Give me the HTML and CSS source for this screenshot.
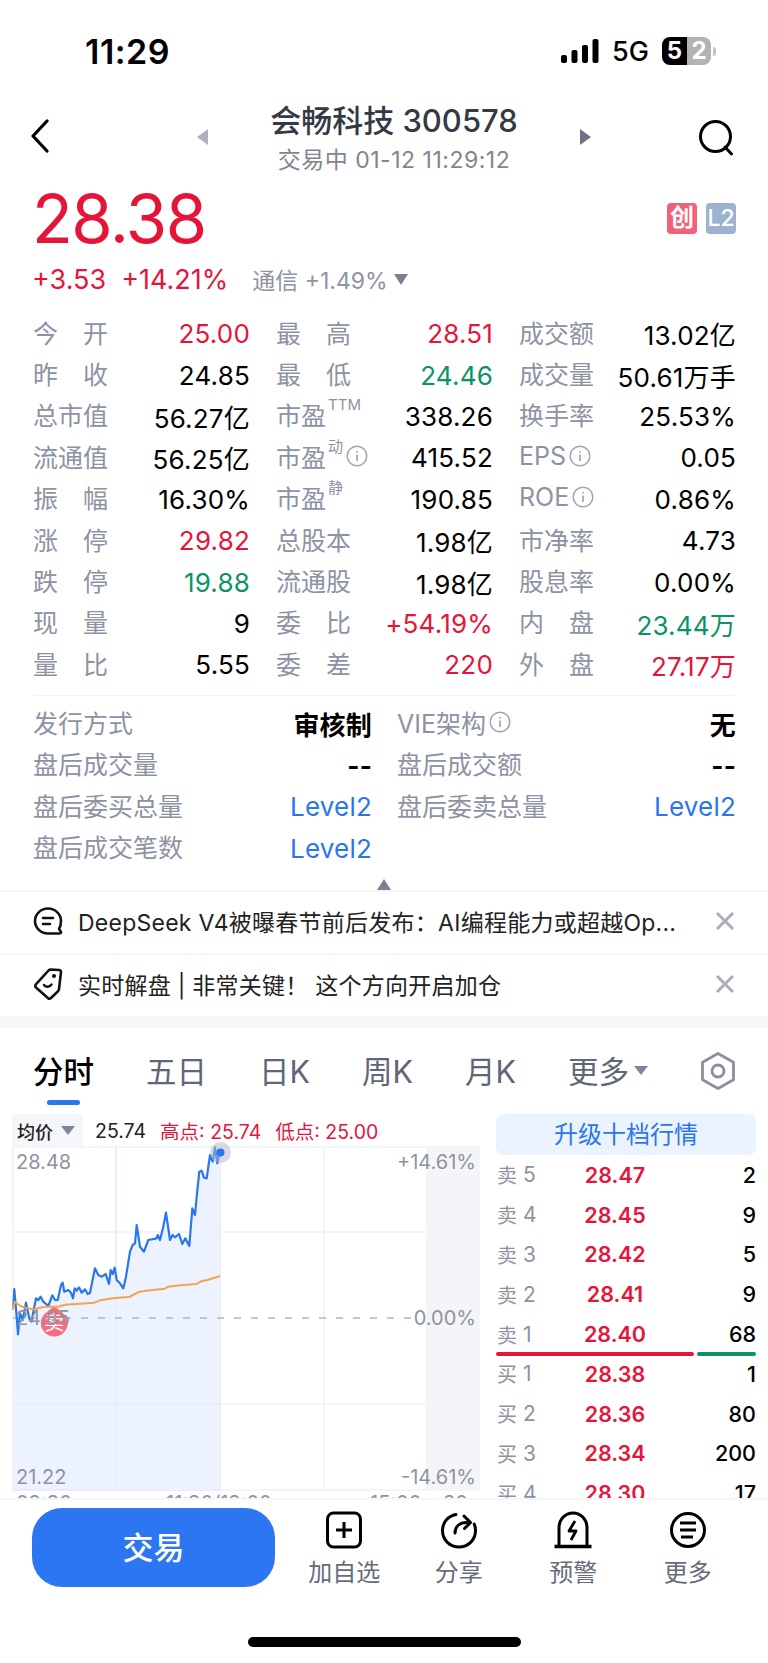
FILE: index.html
```html
<!DOCTYPE html>
<html lang="zh-CN">
<head>
  <meta charset="UTF-8">
  <title>会畅科技 300578</title>
  <link rel="stylesheet" href="styles.css">
</head>
<body>
  <svg class="defs" width="0" height="0">
    <symbol id="info" viewBox="0 0 22 22">
      <circle cx="11" cy="11" r="9.8" fill="none" stroke="currentColor" stroke-width="1.5"/>
      <path d="M11 9.5v6.5M11 6v1.6" fill="none" stroke="currentColor" stroke-width="1.7"/>
    </symbol>
    <symbol id="close" viewBox="0 0 20 20">
      <path d="M2 2l16 16M18 2L2 18" fill="none" stroke="currentColor" stroke-width="3"/>
    </symbol>
  </svg>

  <div class="status">
    <span class="clock">11:29</span>
    <div class="status-right">
      <svg class="signal" width="38" height="24" viewBox="0 0 38 24">
        <rect x="0" y="16" width="6" height="8" rx="2"/>
        <rect x="10.500" y="11" width="6" height="13" rx="2"/>
        <rect x="21" y="6" width="6" height="18" rx="2"/>
        <rect x="31.500" y="0" width="6" height="24" rx="2"/>
      </svg>
      <span class="net">5G</span>
      <div class="battery"><span class="batt-a">5</span><span class="batt-b">2</span></div>
      <i class="batt-nub"></i>
    </div>
  </div>

  <div class="nav">
    <div class="nav-back">
      <svg width="20" height="34" viewBox="0 0 20 34"><path d="M17 2L3 17l14 15" fill="none" stroke="#000" stroke-width="3.200" stroke-linecap="round" stroke-linejoin="round"/></svg>
    </div>
    <div class="nav-mid">
      <i class="arrow-left"></i>
      <div class="nav-title">
        <div class="stock-name">会畅科技 300578</div>
        <div class="stock-sub">交易中 01-12 11:29:12</div>
      </div>
      <i class="arrow-right"></i>
    </div>
    <svg class="nav-search" width="36" height="38" viewBox="0 0 36 38">
      <circle cx="17.500" cy="17.500" r="15" fill="none" stroke="#000" stroke-width="3"/>
      <path d="M27 28l6.500 7" fill="none" stroke="#000" stroke-width="3" stroke-linecap="round"/>
    </svg>
  </div>

  <div class="quote">
    <div class="price-row">
      <span class="price">28.38</span>
      <div class="tags"><span class="tag tag-red">创</span><span class="tag tag-blue">L2</span></div>
    </div>
    <div class="change-row">
      <span class="change">+3.53</span>
      <span class="change">+14.21%</span>
      <span class="sector">通信 +1.49%</span>
      <i class="tri-down"></i>
    </div>
  </div>

  <div class="stats">
    <div class="cell"><span class="lbl">今　开</span><span class="val red">25.00</span></div>
    <div class="cell"><span class="lbl">最　高</span><span class="val red">28.51</span></div>
    <div class="cell"><span class="lbl">成交额</span><span class="val">13.02亿</span></div>

    <div class="cell"><span class="lbl">昨　收</span><span class="val">24.85</span></div>
    <div class="cell"><span class="lbl">最　低</span><span class="val green">24.46</span></div>
    <div class="cell"><span class="lbl">成交量</span><span class="val">50.61万手</span></div>

    <div class="cell"><span class="lbl">总市值</span><span class="val">56.27亿</span></div>
    <div class="cell"><span class="lbl">市盈<sup class="sup">TTM</sup></span><span class="val">338.26</span></div>
    <div class="cell"><span class="lbl">换手率</span><span class="val">25.53%</span></div>

    <div class="cell"><span class="lbl">流通值</span><span class="val">56.25亿</span></div>
    <div class="cell"><span class="lbl">市盈<sup class="sup">动</sup><svg class="info"><use href="#info"/></svg></span><span class="val">415.52</span></div>
    <div class="cell"><span class="lbl">EPS<svg class="info"><use href="#info"/></svg></span><span class="val">0.05</span></div>

    <div class="cell"><span class="lbl">振　幅</span><span class="val">16.30%</span></div>
    <div class="cell"><span class="lbl">市盈<sup class="sup">静</sup></span><span class="val">190.85</span></div>
    <div class="cell"><span class="lbl">ROE<svg class="info"><use href="#info"/></svg></span><span class="val">0.86%</span></div>

    <div class="cell"><span class="lbl">涨　停</span><span class="val red">29.82</span></div>
    <div class="cell"><span class="lbl">总股本</span><span class="val">1.98亿</span></div>
    <div class="cell"><span class="lbl">市净率</span><span class="val">4.73</span></div>

    <div class="cell"><span class="lbl">跌　停</span><span class="val green">19.88</span></div>
    <div class="cell"><span class="lbl">流通股</span><span class="val">1.98亿</span></div>
    <div class="cell"><span class="lbl">股息率</span><span class="val">0.00%</span></div>

    <div class="cell"><span class="lbl">现　量</span><span class="val">9</span></div>
    <div class="cell"><span class="lbl">委　比</span><span class="val red">+54.19%</span></div>
    <div class="cell"><span class="lbl">内　盘</span><span class="val green">23.44万</span></div>

    <div class="cell"><span class="lbl">量　比</span><span class="val">5.55</span></div>
    <div class="cell"><span class="lbl">委　差</span><span class="val red">220</span></div>
    <div class="cell"><span class="lbl">外　盘</span><span class="val red">27.17万</span></div>
  </div>

  <div class="extra">
    <div class="cell"><span class="lbl">发行方式</span><span class="val strong">审核制</span></div>
    <div class="cell"><span class="lbl">VIE架构<svg class="info"><use href="#info"/></svg></span><span class="val strong">无</span></div>
    <div class="cell"><span class="lbl">盘后成交量</span><span class="val strong">--</span></div>
    <div class="cell"><span class="lbl">盘后成交额</span><span class="val strong">--</span></div>
    <div class="cell"><span class="lbl">盘后委买总量</span><span class="val blue">Level2</span></div>
    <div class="cell"><span class="lbl">盘后委卖总量</span><span class="val blue">Level2</span></div>
    <div class="cell"><span class="lbl">盘后成交笔数</span><span class="val blue">Level2</span></div>
  </div>
  <div class="collapse"><i class="tri-up"></i></div>

  <div class="news">
    <svg width="30" height="30" viewBox="0 0 30 30">
      <path d="M15 2.500C8 2.500 2 8 2 15s6 12.500 13 12.500h11.500c1.500 0 2-1.200 1.200-2.300L26 23c1.500-2.400 2-5 2-8 0-7-6-12.500-13-12.500z" fill="none" stroke="#111" stroke-width="2.600" stroke-linejoin="round"/>
      <path d="M10 12h10M10 18h7" fill="none" stroke="#111" stroke-width="2.600" stroke-linecap="round"/>
    </svg>
    <span class="news-text">DeepSeek V4被曝春节前后发布：AI编程能力或超越Op...</span>
    <svg class="news-close"><use href="#close"/></svg>
  </div>
  <div class="news">
    <svg width="30" height="34" viewBox="0 0 30 34">
      <path d="M18 2.500l8 .5c1.300.1 2 1 2 2.200l-2 17c-.1.9-.5 1.500-1.100 2.100L18 31c-1 .9-2.200.9-3.100 0L3 20.500c-1-.9-1-2.200-.1-3.100L15.500 3.500c.7-.7 1.500-1 2.500-1z" fill="none" stroke="#111" stroke-width="2.600" stroke-linejoin="round"/>
      <circle cx="21" cy="9" r="2" fill="#111"/>
      <path d="M11 18c2 2.500 5.500 2.500 7.500-.5" fill="none" stroke="#111" stroke-width="2.400" stroke-linecap="round"/>
    </svg>
    <span class="news-text">实时解盘 | 非常关键！ 这个方向开启加仓</span>
    <svg class="news-close"><use href="#close"/></svg>
  </div>
  <div class="band"></div>

  <div class="tabs">
    <span class="tab tab-on">分时</span>
    <span class="tab">五日</span>
    <span class="tab">日K</span>
    <span class="tab">周K</span>
    <span class="tab">月K</span>
    <span class="tab tab-more">更多<i class="tri-more"></i></span>
    <svg class="tab-hex" width="36" height="38" viewBox="0 0 36 38">
      <path d="M18 1.500l15.500 8.700v17.600L18 36.500 2.500 27.800V10.200z" fill="none" stroke="#8b90a0" stroke-width="2.800" stroke-linejoin="round"/>
      <circle cx="18" cy="19" r="6" fill="none" stroke="#8b90a0" stroke-width="2.800"/>
    </svg>
  </div>

  <div class="market">
    <div class="chart-col">
      <div class="legend">
        <div class="legend-pick">均价<i class="tri-legend"></i></div>
        <span class="legend-now">25.74</span>
        <span class="legend-hi">高点: 25.74</span>
        <span class="legend-hi">低点: 25.00</span>
      </div>
      <svg class="chart" width="480" height="351" viewBox="0 117 480 351">
        <rect x="428" y="117" width="52" height="343" fill="#f4f5f9"/>
        <path class="grid" d="M13 117V460M116 117V460M220 117V460M324 117V460M427 117V460M13 117H480M13 202H480M13 374H480M13 460H480"/>
        <polygon fill="#ecf3fe" points="13.300,460 13.300,276.700 14.300,259 16.700,286.700 18,304.300 20,283.300 22.700,290 26,272.700 29.300,288.300 31.700,291.700 33.300,281.700 36,268.300 38.300,270 40.700,266.700 43.300,271.700 48.300,276 52.300,265.300 55,270 57.700,270 61,255 62.700,252.700 64.300,261.700 68.300,260 71,262.700 73,268.300 74.700,258.300 76.700,260.700 79,257.300 81.700,262.700 85,259.300 87.700,264 90,262.700 95,238.300 98.300,245 101.700,246.700 105.700,244 109,254 110.700,240 112.700,244 114.700,237.700 116.700,250 120,253.300 123.300,258.300 126,246.700 130,221.700 132.700,215 135,213.300 136.700,195 140,216.700 144,221.700 148.300,210 156.700,208.300 157.700,205 160,210 163.300,196.700 166,182.700 170,210 172.700,205 175,207.300 179,204 182.300,214 185.300,208.300 189.300,216 192.300,178.300 195,185 196.700,166.700 199.300,141.700 201.700,140.700 204,147.700 206.700,148.300 210,125 212.700,131.700 215,117.300 217.300,133.300 219.300,123.300 220,460"/>
        <path class="grid-soft" d="M116 117V460M220 117V460M13 374H220M13 460H220"/>
        <path class="zero" d="M13 288H420"/>
        <path fill="#f96c80" d="M54.300 276c3 3.500 13.500 8 13.500 17a13.500 13.500 0 0 1-27 0c0-9 10.500-13.500 13.500-17z"/>
        <text class="bubble" x="54.300" y="300">卖</text>
        <polyline class="line-blue" points="13.300,276.700 14.300,259 16.700,286.700 18,304.300 20,283.300 22.700,290 26,272.700 29.300,288.300 31.700,291.700 33.300,281.700 36,268.300 38.300,270 40.700,266.700 43.300,271.700 48.300,276 52.300,265.300 55,270 57.700,270 61,255 62.700,252.700 64.300,261.700 68.300,260 71,262.700 73,268.300 74.700,258.300 76.700,260.700 79,257.300 81.700,262.700 85,259.300 87.700,264 90,262.700 95,238.300 98.300,245 101.700,246.700 105.700,244 109,254 110.700,240 112.700,244 114.700,237.700 116.700,250 120,253.300 123.300,258.300 126,246.700 130,221.700 132.700,215 135,213.300 136.700,195 140,216.700 144,221.700 148.300,210 156.700,208.300 157.700,205 160,210 163.300,196.700 166,182.700 170,210 172.700,205 175,207.300 179,204 182.300,214 185.300,208.300 189.300,216 192.300,178.300 195,185 196.700,166.700 199.300,141.700 201.700,140.700 204,147.700 206.700,148.300 210,125 212.700,131.700 215,117.300 217.300,133.300 219.300,123.300"/>
        <polyline class="line-orange" points="12.700,280 14.700,271.700 20,275.700 26.700,278.300 35,279.300 41.700,277.300 50,276.700 58.300,276.700 65,274.700 80,273.700 94.300,272.700 100,270.300 115,268 129.300,267 139.300,261.700 150,260.300 165,258.700 168.300,256.700 180,255.300 196.700,254 201,251.300 208.300,249.700 220,246"/>
        <circle cx="220.500" cy="122.500" r="10.500" fill="#b4b6bb" fill-opacity=".5"/>
        <circle cx="220.500" cy="122.500" r="4" fill="#2a76f0"/>
        <text class="axis" x="16" y="139">28.48</text>
        <text class="axis axis-r" x="476" y="139">+14.61%</text>
        <text class="axis" x="16" y="295">24.85</text>
        <text class="axis axis-r" x="476" y="295">0.00%</text>
        <text class="axis" x="16" y="454">21.22</text>
        <text class="axis axis-r" x="476" y="454">-14.61%</text>
        <text class="axis" x="16" y="480">09:30</text>
        <text class="axis" x="166" y="480">11:30/13:00</text>
        <text class="axis" x="370" y="480">15:00</text>
        <text class="axis" x="443" y="480">30</text>
      </svg>
    </div>

    <div class="book">
      <div class="upgrade">升级十档行情</div>
      <div class="book-row"><span class="side">卖<b>5</b></span><span class="bid">28.47</span><span class="qty">2</span></div>
      <div class="book-row"><span class="side">卖<b>4</b></span><span class="bid">28.45</span><span class="qty">9</span></div>
      <div class="book-row"><span class="side">卖<b>3</b></span><span class="bid">28.42</span><span class="qty">5</span></div>
      <div class="book-row"><span class="side">卖<b>2</b></span><span class="bid">28.41</span><span class="qty">9</span></div>
      <div class="book-row"><span class="side">卖<b>1</b></span><span class="bid">28.40</span><span class="qty">68</span></div>
      <div class="book-split"><i class="split-red"></i><i class="split-green"></i></div>
      <div class="book-row"><span class="side">买<b>1</b></span><span class="bid">28.38</span><span class="qty">1</span></div>
      <div class="book-row"><span class="side">买<b>2</b></span><span class="bid">28.36</span><span class="qty">80</span></div>
      <div class="book-row"><span class="side">买<b>3</b></span><span class="bid">28.34</span><span class="qty">200</span></div>
      <div class="book-row"><span class="side">买<b>4</b></span><span class="bid">28.30</span><span class="qty">17</span></div>
    </div>
  </div>

  <div class="bottom">
    <div class="trade">交易</div>
    <div class="action">
      <svg width="38" height="38" viewBox="0 0 38 38">
        <rect x="2.500" y="2" width="33" height="34" rx="6" fill="none" stroke="#000" stroke-width="3"/>
        <path d="M19 11v16M11 19h16" fill="none" stroke="#000" stroke-width="3"/>
      </svg>
      <span>加自选</span>
    </div>
    <div class="action">
      <svg width="38" height="38" viewBox="0 0 38 38">
        <path d="M16 3.500C8 5 2.500 11.500 2.500 19.500 2.500 29 10 36 19 36s16.500-7 16.500-16.500c0-2.500-.4-4.500-1.300-6.500" fill="none" stroke="#000" stroke-width="3" stroke-linecap="round"/>
        <path d="M15 22c0-6 4-10.500 12-10.500" fill="none" stroke="#000" stroke-width="3" stroke-linecap="round"/>
        <path d="M24 5l6.500 6.500-6 6" fill="none" stroke="#000" stroke-width="3" stroke-linecap="round" stroke-linejoin="round"/>
      </svg>
      <span>分享</span>
    </div>
    <div class="action">
      <svg width="40" height="38" viewBox="0 0 40 38">
        <path d="M6 35V17C6 8.500 12 2 20 2s14 6.500 14 15v18" fill="none" stroke="#000" stroke-width="3"/>
        <path d="M1.500 35.500h37" fill="none" stroke="#000" stroke-width="3.400"/>
        <path d="M22 10l-6 10h7l-5 9" fill="none" stroke="#000" stroke-width="2.800" stroke-linejoin="round"/>
      </svg>
      <span>预警</span>
    </div>
    <div class="action">
      <svg width="38" height="38" viewBox="0 0 38 38">
        <circle cx="19" cy="19" r="16.500" fill="none" stroke="#000" stroke-width="3"/>
        <path d="M11 12h16M11 19h16M12 26h12" fill="none" stroke="#000" stroke-width="3"/>
      </svg>
      <span>更多</span>
    </div>
  </div>
  <div class="home-bar"><i></i></div>
</body>
</html>
```

FILE: styles.css
```css
* {
  box-sizing: border-box;
}

body {
  margin: 0;
  width: 768px;
  height: 1663px;
  overflow: hidden;
  background-color: #fff;
  color: #000;
  font-family: Inter, "Noto Sans CJK SC", sans-serif;
}

i {
  display: block;
}

.defs {
  display: block;
  height: 0;
}

/* status bar */
.status {
  height: 102px;
  padding: 0 52px 0 85px;
  display: flex;
  justify-content: space-between;
  align-items: center;
}

.clock {
  font-size: 34px;
  font-weight: 600;
  letter-spacing: 0.5px;
}

.status-right {
  display: flex;
  align-items: center;
}

.net {
  font-size: 27px;
  font-weight: 500;
  margin-left: 13px;
  width: 50px;
}

.battery {
  width: 49px;
  height: 28px;
  border-radius: 8px;
  overflow: hidden;
  display: flex;
  font-size: 24px;
  font-weight: 700;
  color: #fff;
  line-height: 28px;
  text-align: center;
}

.batt-a {
  width: 25px;
  background-color: #000;
}

.batt-b {
  flex: 1;
  background-color: #b3b3b3;
}

.batt-nub {
  width: 3px;
  height: 9px;
  margin-left: 2px;
  background-color: #c4c4c4;
  border-radius: 0 3px 3px 0;
}

/* nav */
.nav {
  height: 74px;
  padding-left: 30px;
  display: flex;
  align-items: center;
}

.nav-back {
  width: 167px;
  margin-top: -3px;
}

.nav-mid {
  width: 394px;
  display: flex;
  justify-content: space-between;
  align-items: center;
}

.arrow-left {
  margin-top: -5px;
  border: 8px solid transparent;
  border-left: 0;
  border-right: 11px solid #aeb2bd;
}

.arrow-right {
  margin-top: -5px;
  border: 8px solid transparent;
  border-right: 0;
  border-left: 11px solid #6d7384;
}

.nav-title {
  text-align: center;
}

.stock-name {
  font-size: 31px;
  line-height: 38px;
  font-weight: 500;
  color: #333a45;
}

.stock-sub {
  margin-top: 4px;
  font-size: 23px;
  line-height: 32px;
  letter-spacing: 0.5px;
  color: #7f8592;
}

.nav-search {
  margin-left: 107px;
  margin-top: -3px;
}

/* price */
.quote {
  height: 137px;
  padding: 0 32px;
}

.price-row {
  height: 85px;
  display: flex;
  justify-content: space-between;
  align-items: center;
}

.price {
  font-size: 67px;
  letter-spacing: -1.5px;
  color: #e5153a;
}

.tags {
  display: flex;
  gap: 9px;
}

.tag {
  width: 30px;
  height: 31px;
  border-radius: 4px;
  color: #fff;
  font-size: 24px;
  font-weight: 600;
  line-height: 30px;
  text-align: center;
}

.tag-red {
  background-color: #f0627a;
}

.tag-blue {
  background-color: #9db2d0;
  font-size: 23px;
  font-weight: 500;
}

.change-row {
  display: flex;
  align-items: center;
  height: 36px;
}

.change {
  font-size: 27px;
  color: #e5153a;
  margin-right: 15px;
}

.sector {
  font-size: 23px;
  color: #8d93a3;
  margin-left: 9px;
}

.tri-down {
  margin-left: 6px;
  border: 7px solid transparent;
  border-bottom: 0;
  border-top: 11px solid #7a8090;
}

/* stat tables */
.stats {
  padding: 0 33px;
  height: 382px;
  display: grid;
  grid-template-columns: 216px 216px 216px;
  grid-auto-rows: 41.400px;
  column-gap: 27px;
}

.extra {
  margin: 0 33px;
  padding-top: 7px;
  border-top: 1px solid #f3f4f7;
  display: grid;
  grid-template-columns: 338px 338px;
  grid-auto-rows: 41.500px;
  column-gap: 26px;
}

.cell {
  display: flex;
  justify-content: space-between;
  align-items: center;
  font-size: 25px;
  white-space: nowrap;
}

.lbl {
  margin-top: -4px;
  color: #8d93a3;
  display: flex;
  align-items: center;
}

.val {
  font-size: 26px;
  letter-spacing: 0.2px;
  margin-right: -1px;
  color: #000;
}

.red {
  color: #e5153a;
}

.green {
  color: #0a9464;
}

.blue {
  color: #2a76f0;
}

.strong {
  font-weight: 700;
}

.sup {
  font-size: 15px;
  line-height: 15px;
  align-self: flex-start;
  margin: 1px 0 0 2px;
}

.info {
  width: 22px;
  height: 22px;
  margin-left: 3px;
  color: #a0a5b2;
}

.collapse {
  height: 23px;
  padding-top: 6px;
  border-bottom: 2px solid #f5f6fa;
  display: flex;
  justify-content: center;
}

.tri-up {
  border: 7px solid transparent;
  border-top: 0;
  border-bottom: 11px solid #7a8090;
}

/* news strips */
.news {
  height: 63px;
  padding: 0 33px 3px;
  border-bottom: 2px solid #f5f6fa;
  display: flex;
  align-items: center;
}

.news-text {
  flex: 1;
  margin-left: 15px;
  font-size: 23px;
  letter-spacing: 0.25px;
  color: #222;
  white-space: nowrap;
}

.news-close {
  width: 20px;
  height: 20px;
  color: #a9aeba;
}

.band {
  height: 10px;
  background-color: #f5f6fa;
}

/* tabs */
.tabs {
  height: 86px;
  padding: 0 33px;
  display: flex;
  align-items: center;
  gap: 52px;
}

.tab {
  flex: none;
  white-space: nowrap;
  font-size: 30.500px;
  color: #5f6676;
  margin-top: -2px;
}

.tab-on {
  color: #000;
  font-weight: 500;
  position: relative;
}

.tab-on::after {
  content: "";
  position: absolute;
  left: 14px;
  right: 14px;
  bottom: -13px;
  height: 5px;
  border-radius: 3px;
  background-color: #2a76f0;
}

.tab-more {
  display: flex;
  align-items: center;
}

.tri-more {
  margin-left: 5px;
  border: 7px solid transparent;
  border-bottom: 0;
  border-top: 9px solid #80869a;
}

.tab-hex {
  margin-left: auto;
  margin-right: -1px;
}

/* chart and order book */
.market {
  height: 384px;
  overflow: hidden;
  display: flex;
}

.chart-col {
  width: 480px;
  flex: none;
}

.legend {
  height: 33px;
  padding-left: 12px;
  display: flex;
  align-items: center;
  font-size: 19.500px;
}

.legend-pick {
  width: 71px;
  height: 33px;
  padding-left: 5px;
  border-radius: 4px;
  background-color: #f5f6fa;
  display: flex;
  align-items: center;
  font-size: 18px;
  font-weight: 500;
  color: #222;
}

.tri-legend {
  margin-left: 8px;
  border: 7px solid transparent;
  border-bottom: 0;
  border-top: 9px solid #80869a;
}

.legend-now {
  margin-left: 12px;
  color: #222;
}

.legend-hi {
  margin-left: 14px;
  color: #e5153a;
}

.chart {
  display: block;
  overflow: visible;
}

.grid {
  fill: none;
  stroke: #f4f5f9;
  stroke-width: 2;
}

.grid-soft {
  fill: none;
  stroke: #e5ecf8;
  stroke-width: 1.500;
}

.zero {
  fill: none;
  stroke: #b4b7c1;
  stroke-width: 1.500;
  stroke-dasharray: 7 10;
}

.line-blue {
  fill: none;
  stroke: #2a76f0;
  stroke-width: 2.200;
  stroke-linejoin: round;
}

.line-orange {
  fill: none;
  stroke: #f9a24e;
  stroke-width: 2;
  stroke-linejoin: round;
}

.bubble {
  font-size: 20px;
  fill: #fff;
  text-anchor: middle;
}

.axis {
  font-size: 20px;
  fill: #8f939f;
}

.axis-r {
  text-anchor: end;
}

.book {
  width: 260px;
  margin-left: 16px;
  flex: none;
}

.upgrade {
  height: 41px;
  border-radius: 8px;
  background-color: #ebf3fe;
  color: #2a76f0;
  font-size: 24px;
  line-height: 41px;
  text-align: center;
}

.book-row {
  height: 39.800px;
  display: grid;
  grid-template-columns: 82px 74px 1fr;
  align-items: center;
  font-size: 21.500px;
}

.side {
  font-size: 20px;
  color: #8d93a3;
  display: flex;
  align-items: center;
  padding-left: 1px;
}

.side b {
  font-weight: 400;
  font-size: 21px;
  margin-left: 6px;
}

.bid {
  color: #e5153a;
  font-weight: 600;
  text-align: center;
}

.qty {
  font-weight: 500;
  text-align: right;
}

.book-split {
  height: 4px;
  margin: -2px 0;
  display: flex;
  gap: 3px;
}

.split-red {
  width: 198px;
  border-radius: 2px;
  background-color: #e5153a;
}

.split-green {
  flex: 1;
  border-radius: 2px;
  background-color: #0a9464;
}

/* bottom bar */
.bottom {
  height: 127px;
  padding: 8px 0 0 32px;
  border-top: 2px solid #f5f6fa;
  display: flex;
  background-color: #fff;
}

.trade {
  width: 243px;
  height: 79px;
  border-radius: 30px;
  background-color: #2d76f1;
  color: #fff;
  font-size: 31px;
  font-weight: 500;
  line-height: 79px;
  text-align: center;
  margin-right: 12px;
}

.action {
  width: 114.500px;
  display: flex;
  flex-direction: column;
  align-items: center;
  font-size: 24px;
  line-height: 36px;
  color: #666c7a;
  padding-top: 3px;
}

.action span {
  margin-top: 6px;
}

.home-bar {
  display: flex;
  justify-content: center;
  padding-top: 12px;
}

.home-bar i {
  width: 273px;
  height: 10px;
  border-radius: 5px;
  background-color: #000;
}
```
